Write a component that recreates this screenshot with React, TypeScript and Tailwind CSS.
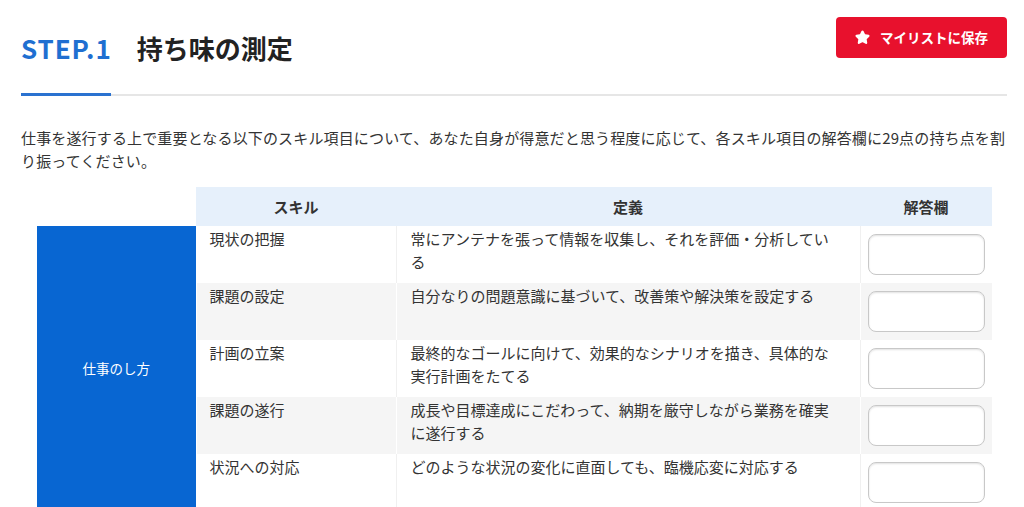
import { Star } from "lucide-react";

const rows = [
  { skill: "現状の把握", def: "常にアンテナを張って情報を収集し、それを評価・分析している" },
  { skill: "課題の設定", def: "自分なりの問題意識に基づいて、改善策や解決策を設定する" },
  { skill: "計画の立案", def: "最終的なゴールに向けて、効果的なシナリオを描き、具体的な実行計画をたてる" },
  { skill: "課題の遂行", def: "成長や目標達成にこだわって、納期を厳守しながら業務を確実に遂行する" },
  { skill: "状況への対応", def: "どのような状況の変化に直面しても、臨機応変に対応する" },
];

const App = () => {
  return (
    <div
      className="h-[507px] overflow-hidden bg-white text-[#333]"
      style={{ fontFamily: '"Noto Sans CJK JP", "Noto Sans", sans-serif' }}
    >
      <div className="ml-[21px] w-[986px]">
        <div className="flex items-start justify-between">
          <h1 className="pt-[28px] text-[26px] font-bold leading-[39px]">
            <span className="mr-[25px] tracking-[0.9px] text-[#1f6fd1]">STEP.1</span>
            <span className="text-[#222]">持ち味の測定</span>
          </h1>
          <button className="mt-[17px] flex h-[41px] w-[171px] items-center justify-center gap-[10px] rounded bg-[#e8112d] text-[13.5px] font-bold text-white">
            <Star size={15} fill="white" strokeWidth={2.5} strokeLinejoin="round" />
            マイリストに保存
          </button>
        </div>
        <div className="mt-[26px] flex items-end">
          <div className="h-[3px] w-[90px] bg-[#2a72d0]" />
          <div className="h-[2px] flex-1 bg-[#e6e6e6]" />
        </div>

        <p className="mt-[30px] text-[15px] leading-[23px] tracking-[0.15px]">
          仕事を遂行する上で重要となる以下のスキル項目について、あなた自身が得意だと思う程度に応じて、各スキル項目の解答欄に29点の持ち点を割り振ってください。
        </p>

        <table className="ml-[16px] mt-[15px] w-[955px] table-fixed border-collapse text-[15px] leading-[23px]">
          <colgroup>
            <col className="w-[159px]" />
            <col className="w-[200px]" />
            <col className="w-[464px]" />
            <col className="w-[132px]" />
          </colgroup>
          <thead>
            <tr className="h-[39px]">
              <th className="bg-white" />
              <th className="bg-[#e6f0fb] font-bold">スキル</th>
              <th className="bg-[#e6f0fb] font-bold">定義</th>
              <th className="bg-[#e6f0fb] font-bold">解答欄</th>
            </tr>
          </thead>
          <tbody>
            {rows.map((r, i) => {
              const gray = i % 2 === 1;
              const cell = gray
                ? "bg-[#f5f5f5] border-r border-white"
                : "bg-white border-r border-[#f0f0f0]";
              return (
                <tr key={r.skill} className="h-[57px]">
                  {i === 0 && (
                    <td
                      rowSpan={5}
                      className="border-r border-white bg-[#0866d2] text-center align-middle text-[13.5px] text-white"
                    >
                      仕事のし方
                    </td>
                  )}
                  <td className={`${cell} pl-[13px] pr-[14px] pt-[1px] align-top`}>{r.skill}</td>
                  <td className={`${cell} pl-[14px] pr-[17px] pt-[1px] align-top`}>{r.def}</td>
                  <td className={`${gray ? "bg-[#f5f5f5]" : "bg-white"} align-middle`}>
                    <input
                      type="text"
                      className="mx-auto block h-[41px] w-[117px] rounded-lg border border-[#c8c8c8] bg-white shadow-[inset_0_1px_2px_rgba(0,0,0,0.12)]"
                    />
                  </td>
                </tr>
              );
            })}
          </tbody>
        </table>
      </div>
    </div>
  );
};

export default App;
